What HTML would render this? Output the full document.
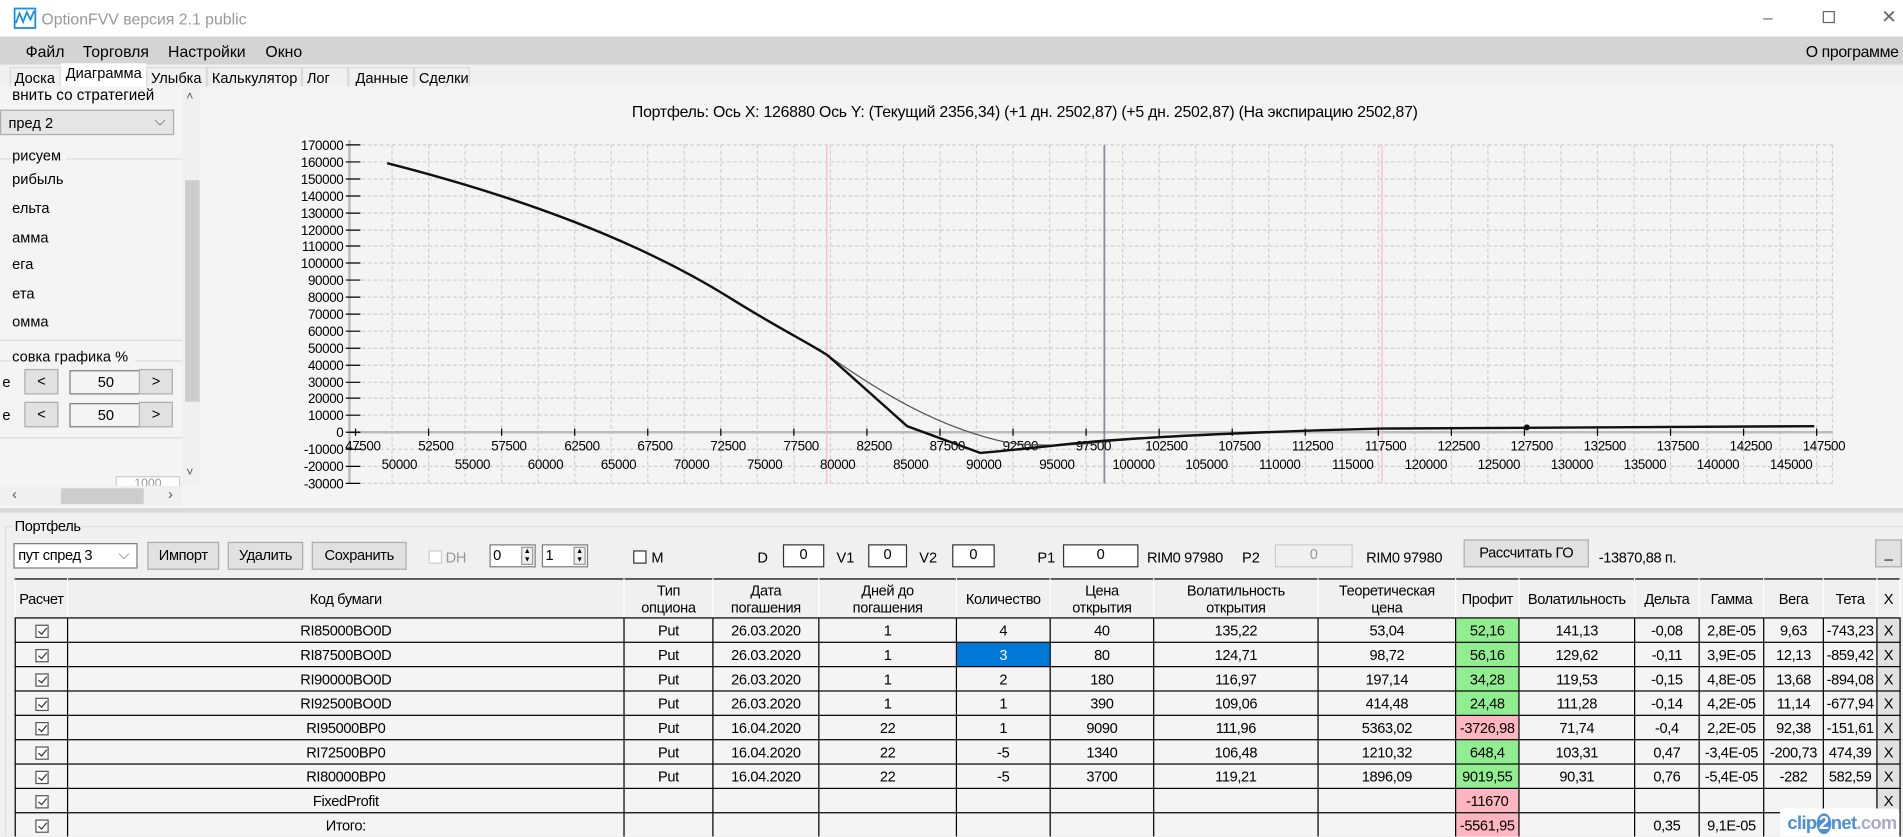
<!DOCTYPE html>
<html><head><meta charset="utf-8">
<style>
*{box-sizing:border-box;margin:0;padding:0}
body{width:1903px;height:836px;overflow:hidden;background:#f0f0f0;font-family:"Liberation Sans",sans-serif;font-size:12px;color:#000;position:relative}
#w{position:absolute;left:0;top:0;width:1563px;height:687px;transform:scale(1.2176);transform-origin:0 0;overflow:hidden}
.a{position:absolute;white-space:nowrap}
.btn{position:absolute;background:#e1e1e1;border:1px solid #adadad;text-align:center;font-size:12px;letter-spacing:-0.3px}
.inp{position:absolute;background:#fff;border:1px solid #7a7a7a;text-align:center;font-size:12px}
.cb{position:absolute;width:11px;height:11px;border:1px solid #333;background:#fff}
table{position:absolute;left:12px;top:475px;border-collapse:collapse;table-layout:fixed;font-size:12px;letter-spacing:-0.3px}
td{border:1px solid #000;height:20px;text-align:center;background:#f4f4f4;padding:0;overflow:hidden;white-space:nowrap}
tr.h td{height:32px;background:#f0f0f0;border-color:#000 #fff #000 #fff;line-height:14px}
td.g{background:#90ee90}td.p{background:#ffb6c1}td.x{background:#e1e1e1;border-color:#000 #000 #000 #adadad}
td.s{background:#0078d7;color:#fff}
.ck{display:inline-block;width:11px;height:11px;border:1px solid #555;background:#fff;position:relative;vertical-align:middle}
.ck:after{content:"";position:absolute;left:3px;top:0px;width:3px;height:6px;border:solid #333;border-width:0 1px 1px 0;transform:rotate(40deg)}
</style></head><body><div id="w">
<div class="a" style="left:0;top:0;width:1563px;height:30px;background:#fff"></div>
<svg class="a" style="left:11px;top:6px" width="19" height="18" viewBox="0 0 19 18"><rect x="1" y="1" width="17" height="16" fill="none" stroke="#1e90e0" stroke-width="1.5"/><path d="M2 13 L5 5 L8 12 L11 4 L14 10 L17 3" fill="none" stroke="#1e90e0" stroke-width="1.5"/></svg>
<div class="a" style="left:34px;top:8px;font-size:13px;color:#999">OptionFVV версия 2.1 public</div>
<div class="a" style="left:1448px;top:6px;font-size:14px;color:#666">–</div>
<div class="a" style="left:1497px;top:9px;width:10px;height:10px;border:1px solid #666"></div>
<div class="a" style="left:1545px;top:5px;font-size:15px;color:#666">✕</div>
<div class="a" style="left:0;top:30px;width:1563px;height:23px;background:#d4d4d4"></div>
<div class="a" style="left:21px;top:35px;font-size:13px">Файл</div>
<div class="a" style="left:68px;top:35px;font-size:13px">Торговля</div>
<div class="a" style="left:138px;top:35px;font-size:13px">Настройки</div>
<div class="a" style="left:218px;top:35px;font-size:13px">Окно</div>
<div class="a" style="left:1483px;top:35px;font-size:13px;letter-spacing:-0.3px">О программе</div>
<div class="a" style="left:8px;top:55px;width:42px;height:17px;border:1px solid #d9d9d9;background:#f0f0f0;padding:1px 3px">Доска</div>
<div class="a" style="left:50px;top:52px;width:70px;height:20px;background:#fff;padding:1px 4px">Диаграмма</div>
<div class="a" style="left:120px;top:55px;width:50px;height:17px;border:1px solid #d9d9d9;padding:1px 3px">Улыбка</div>
<div class="a" style="left:170px;top:55px;width:78px;height:17px;border:1px solid #d9d9d9;padding:1px 3px">Калькулятор</div>
<div class="a" style="left:248px;top:55px;width:38px;height:17px;border:1px solid #d9d9d9;padding:1px 3px">Лог</div>
<div class="a" style="left:286px;top:55px;width:54px;height:17px;border:1px solid #d9d9d9;padding:1px 5px">Данные</div>
<div class="a" style="left:340px;top:55px;width:46px;height:17px;border:1px solid #d9d9d9;padding:1px 3px">Сделки</div>
<div class="a" style="left:0;top:71px;width:165px;height:345px;background:#f4f4f4;overflow:hidden">
 <div class="a" style="left:10px;top:0px;font-size:12.5px">внить со стратегией</div>
 <div class="a" style="left:0;top:19px;width:143px;height:21px;background:#e5e5e5;border:1px solid #adadad;padding:3px 6px">пред 2<span style="position:absolute;right:6px;top:1px;color:#555">⌵</span></div>
 <div class="a" style="left:0;top:59px;width:150px;border-top:1px solid #ddd"></div>
 <div class="a" style="left:10px;top:50px;background:#f4f4f4;padding-right:4px">рисуем</div>
 <div class="a" style="left:10px;top:69px">рибыль</div>
 <div class="a" style="left:10px;top:93px">ельта</div>
 <div class="a" style="left:10px;top:117px">амма</div>
 <div class="a" style="left:10px;top:139px">ега</div>
 <div class="a" style="left:10px;top:163px">ета</div>
 <div class="a" style="left:10px;top:186px">омма</div>
 <div class="a" style="left:0;top:208px;width:150px;border-top:1px solid #ddd"></div>
 <div class="a" style="left:0;top:225px;width:150px;border-top:1px solid #ddd"></div>
 <div class="a" style="left:10px;top:215px;background:#f4f4f4;padding-right:6px">совка графика %</div>
 <div class="a" style="left:2px;top:236px">е</div>
 <div class="btn" style="left:20px;top:232px;width:28px;height:21px;line-height:19px">&lt;</div>
 <div class="inp" style="left:57px;top:233px;width:60px;height:20px;line-height:18px;background:#f4f4f4">50</div>
 <div class="btn" style="left:114px;top:232px;width:28px;height:21px;line-height:19px">&gt;</div>
 <div class="a" style="left:2px;top:263px">е</div>
 <div class="btn" style="left:20px;top:259px;width:28px;height:21px;line-height:19px">&lt;</div>
 <div class="inp" style="left:57px;top:260px;width:60px;height:20px;line-height:18px;background:#f4f4f4">50</div>
 <div class="btn" style="left:114px;top:259px;width:28px;height:21px;line-height:19px">&gt;</div>
 <div class="a" style="left:0;top:288px;width:150px;border-top:1px solid #ddd"></div>
 <div class="inp" style="left:95px;top:320px;width:53px;height:14px;font-size:10px;color:#999;border-color:#ccc">1000</div>
 <div class="a" style="left:150px;top:0;width:15px;height:328px;background:#f0f0f0"></div>
 <div class="a" style="left:152px;top:77px;width:12px;height:182px;background:#cdcdcd"></div>
 <div class="a" style="left:153px;top:3px;font-size:10px;color:#555">˄</div>
 <div class="a" style="left:153px;top:312px;font-size:10px;color:#555">˅</div>
 <div class="a" style="left:0;top:328px;width:150px;height:17px;background:#f0f0f0"></div>
 <div class="a" style="left:50px;top:330px;width:68px;height:13px;background:#cdcdcd"></div>
 <div class="a" style="left:10px;top:328px;color:#555">‹</div>
 <div class="a" style="left:138px;top:328px;color:#555">›</div>
</div>
<div class="a" style="left:165px;top:71px;width:1398px;height:345px;background:#f4f4f4"></div>
<div class="a" style="left:519px;top:84px;font-size:13px;letter-spacing:-0.2px">Портфель: Ось X: 126880 Ось Y:  (Текущий 2356,34)  (+1 дн. 2502,87)  (+5 дн. 2502,87)  (На экспирацию 2502,87)</div>
<svg class="a" style="left:0;top:0" width="1563" height="420" font-family="Liberation Sans, sans-serif" font-size="11">
<g stroke="#d0d0d0" stroke-dasharray="3,2" stroke-width="1">
<line x1="287" y1="119" x2="1505" y2="119"/><line x1="287" y1="133" x2="1505" y2="133"/><line x1="287" y1="147" x2="1505" y2="147"/><line x1="287" y1="161" x2="1505" y2="161"/><line x1="287" y1="175" x2="1505" y2="175"/><line x1="287" y1="189" x2="1505" y2="189"/><line x1="287" y1="202" x2="1505" y2="202"/><line x1="287" y1="216" x2="1505" y2="216"/><line x1="287" y1="230" x2="1505" y2="230"/><line x1="287" y1="244" x2="1505" y2="244"/><line x1="287" y1="258" x2="1505" y2="258"/><line x1="287" y1="272" x2="1505" y2="272"/><line x1="287" y1="286" x2="1505" y2="286"/><line x1="287" y1="300" x2="1505" y2="300"/><line x1="287" y1="314" x2="1505" y2="314"/><line x1="287" y1="327" x2="1505" y2="327"/><line x1="287" y1="341" x2="1505" y2="341"/><line x1="287" y1="369" x2="1505" y2="369"/><line x1="287" y1="383" x2="1505" y2="383"/><line x1="287" y1="397" x2="1505" y2="397"/>
<path d="M322 119V397M352 119V397M382 119V397M412 119V397M442 119V397M472 119V397M502 119V397M532 119V397M562 119V397M592 119V397M622 119V397M652 119V397M682 119V397M712 119V397M742 119V397M772 119V397M802 119V397M832 119V397M862 119V397M892 119V397M922 119V397M952 119V397M982 119V397M1012 119V397M1042 119V397M1072 119V397M1102 119V397M1132 119V397M1162 119V397M1192 119V397M1222 119V397M1252 119V397M1282 119V397M1312 119V397M1342 119V397M1372 119V397M1402 119V397M1432 119V397M1462 119V397M1492 119V397M1505 119V397"/>
</g>
<line x1="287" y1="355" x2="1505" y2="355" stroke="#bbb" stroke-width="2"/>
<line x1="287" y1="115" x2="287" y2="397" stroke="#bbb" stroke-width="2"/>
<line x1="679" y1="119" x2="679" y2="397" stroke="#ffb6c1"/>
<line x1="1135" y1="119" x2="1135" y2="397" stroke="#ffb6c1"/>
<line x1="907" y1="119" x2="907" y2="397" stroke="#8090a8" stroke-width="1.5"/>
<g stroke="#000"><path d="M284 119h12M284 133h12M284 147h12M284 161h12M284 175h12M284 189h12M284 202h12M284 216h12M284 230h12M284 244h12M284 258h12M284 272h12M284 286h12M284 300h12M284 314h12M284 327h12M284 341h12M284 355h12M284 369h12M284 383h12M284 397h12"/>
<path d="M292 352v6M352 352v6M412 352v6M472 352v6M532 352v6M592 352v6M652 352v6M712 352v6M772 352v6M832 352v6M892 352v6M952 352v6M1012 352v6M1072 352v6M1132 352v6M1192 352v6M1252 352v6M1312 352v6M1372 352v6M1432 352v6M1492 352v6"/></g>
<g text-anchor="end" letter-spacing="-0.3">
<text x="282" y="123">170000</text><text x="282" y="137">160000</text><text x="282" y="151">150000</text><text x="282" y="165">140000</text><text x="282" y="179">130000</text><text x="282" y="193">120000</text><text x="282" y="206">110000</text><text x="282" y="220">100000</text><text x="282" y="234">90000</text><text x="282" y="248">80000</text><text x="282" y="262">70000</text><text x="282" y="276">60000</text><text x="282" y="290">50000</text><text x="282" y="304">40000</text><text x="282" y="318">30000</text><text x="282" y="331">20000</text><text x="282" y="345">10000</text><text x="282" y="359">0</text><text x="282" y="373">-10000</text><text x="282" y="387">-20000</text><text x="282" y="401">-30000</text></g>
<g text-anchor="middle" letter-spacing="-0.3">
<text x="298" y="370">47500</text><text x="358" y="370">52500</text><text x="418" y="370">57500</text><text x="478" y="370">62500</text><text x="538" y="370">67500</text><text x="598" y="370">72500</text><text x="658" y="370">77500</text><text x="718" y="370">82500</text><text x="778" y="370">87500</text><text x="838" y="370">92500</text><text x="898" y="370">97500</text><text x="958" y="370">102500</text><text x="1018" y="370">107500</text><text x="1078" y="370">112500</text><text x="1138" y="370">117500</text><text x="1198" y="370">122500</text><text x="1258" y="370">127500</text><text x="1318" y="370">132500</text><text x="1378" y="370">137500</text><text x="1438" y="370">142500</text><text x="1498" y="370">147500</text>
<text x="328" y="385">50000</text><text x="388" y="385">55000</text><text x="448" y="385">60000</text><text x="508" y="385">65000</text><text x="568" y="385">70000</text><text x="628" y="385">75000</text><text x="688" y="385">80000</text><text x="748" y="385">85000</text><text x="808" y="385">90000</text><text x="868" y="385">95000</text><text x="931" y="385">100000</text><text x="991" y="385">105000</text><text x="1051" y="385">110000</text><text x="1111" y="385">115000</text><text x="1171" y="385">120000</text><text x="1231" y="385">125000</text><text x="1291" y="385">130000</text><text x="1351" y="385">135000</text><text x="1411" y="385">140000</text><text x="1471" y="385">145000</text></g>
<path d="M680 292 C720 320 770 352 830 364 C870 368 900 364 930 360" fill="none" stroke="#555" stroke-width="1"/>
<path d="M318 134 C420 160 520 195 600 245 C640 270 665 282 680 292 L745 350 L805 372 C850 368 880 364 907 362 C960 358 1050 354 1135 352 C1200 351 1300 351 1490 350" fill="none" stroke="#111" stroke-width="2"/>
<circle cx="1254" cy="351" r="2.5" fill="#111"/>
</svg>
<div class="a" style="left:0;top:416px;width:1563px;height:5px;background:#d9d9d9;border-top:1px solid #fff"></div>
<div class="a" style="left:4px;top:432px;width:1559px;border-top:1px solid #ddd"></div>
<div class="a" style="left:4px;top:432px;width:1px;height:260px;background:#ddd"></div>
<div class="a" style="left:10px;top:425px;background:#f0f0f0;padding:0 2px;letter-spacing:-0.3px">Портфель</div>
<div class="a" style="left:11px;top:446px;width:102px;height:21px;background:#fff;border:1px solid #7a7a7a;padding:2px 3px;letter-spacing:-0.3px">пут спред 3<span style="position:absolute;right:6px;top:1px;color:#777">⌵</span></div>
<div class="btn" style="left:121px;top:445px;width:59px;height:23px;line-height:21px">Импорт</div>
<div class="btn" style="left:187px;top:445px;width:62px;height:23px;line-height:21px">Удалить</div>
<div class="btn" style="left:256px;top:445px;width:78px;height:23px;line-height:21px">Сохранить</div>
<div class="cb" style="left:352px;top:452px;border-color:#ccc"></div>
<div class="a" style="left:366px;top:451px;color:#999;letter-spacing:-0.3px">DH</div>
<div class="inp" style="left:402px;top:447px;width:38px;height:19px;text-align:left;padding-left:2px;line-height:16px">0<span style="position:absolute;right:1px;top:1px;width:10px;height:15px;border:1px solid #999;background:#eee;font-size:6px;line-height:7px;text-align:center">▲<br>▼</span></div>
<div class="inp" style="left:445px;top:447px;width:38px;height:19px;text-align:left;padding-left:2px;line-height:16px">1<span style="position:absolute;right:1px;top:1px;width:10px;height:15px;border:1px solid #999;background:#eee;font-size:6px;line-height:7px;text-align:center">▲<br>▼</span></div>
<div class="cb" style="left:520px;top:452px"></div>
<div class="a" style="left:535px;top:451px">M</div>
<div class="a" style="left:622px;top:451px">D</div>
<div class="inp" style="left:643px;top:447px;width:34px;height:19px;border-color:#333">0</div>
<div class="a" style="left:687px;top:451px">V1</div>
<div class="inp" style="left:713px;top:447px;width:32px;height:19px;border-color:#333">0</div>
<div class="a" style="left:755px;top:451px">V2</div>
<div class="inp" style="left:782px;top:447px;width:35px;height:19px;border-color:#333">0</div>
<div class="a" style="left:852px;top:451px">P1</div>
<div class="inp" style="left:873px;top:447px;width:62px;height:19px;border-color:#333">0</div>
<div class="a" style="left:942px;top:451px;letter-spacing:-0.3px">RIM0 97980</div>
<div class="a" style="left:1020px;top:451px">P2</div>
<div class="inp" style="left:1047px;top:447px;width:64px;height:19px;border-color:#ccc;color:#999;background:#f0f0f0">0</div>
<div class="a" style="left:1122px;top:451px;letter-spacing:-0.3px">RIM0 97980</div>
<div class="btn" style="left:1202px;top:443px;width:103px;height:23px;line-height:21px">Рассчитать ГО</div>
<div class="a" style="left:1313px;top:451px;letter-spacing:-0.3px">-13870,88 п.</div>
<div class="btn" style="left:1540px;top:443px;width:22px;height:23px;line-height:21px">_</div>
<table>
<colgroup><col style="width:43px"><col style="width:457px"><col style="width:73px"><col style="width:87px"><col style="width:113px"><col style="width:77px"><col style="width:85px"><col style="width:135px"><col style="width:113px"><col style="width:52px"><col style="width:95px"><col style="width:53px"><col style="width:53px"><col style="width:49px"><col style="width:44px"><col style="width:19px"></colgroup>
<tr class="h"><td>Расчет</td><td>Код бумаги</td><td>Тип<br>опциона</td><td>Дата<br>погашения</td><td>Дней до<br>погашения</td><td>Количество</td><td>Цена<br>открытия</td><td>Волатильность<br>открытия</td><td>Теоретическая<br>цена</td><td>Профит</td><td>Волатильность</td><td>Дельта</td><td>Гамма</td><td>Вега</td><td>Тета</td><td>X</td></tr>
<tr><td><span class="ck"></span></td><td>RI85000BO0D</td><td>Put</td><td>26.03.2020</td><td>1</td><td>4</td><td>40</td><td>135,22</td><td>53,04</td><td class="g">52,16</td><td>141,13</td><td>-0,08</td><td>2,8E-05</td><td>9,63</td><td>-743,23</td><td class="x">X</td></tr>
<tr><td><span class="ck"></span></td><td>RI87500BO0D</td><td>Put</td><td>26.03.2020</td><td>1</td><td class="s">3</td><td>80</td><td>124,71</td><td>98,72</td><td class="g">56,16</td><td>129,62</td><td>-0,11</td><td>3,9E-05</td><td>12,13</td><td>-859,42</td><td class="x">X</td></tr>
<tr><td><span class="ck"></span></td><td>RI90000BO0D</td><td>Put</td><td>26.03.2020</td><td>1</td><td>2</td><td>180</td><td>116,97</td><td>197,14</td><td class="g">34,28</td><td>119,53</td><td>-0,15</td><td>4,8E-05</td><td>13,68</td><td>-894,08</td><td class="x">X</td></tr>
<tr><td><span class="ck"></span></td><td>RI92500BO0D</td><td>Put</td><td>26.03.2020</td><td>1</td><td>1</td><td>390</td><td>109,06</td><td>414,48</td><td class="g">24,48</td><td>111,28</td><td>-0,14</td><td>4,2E-05</td><td>11,14</td><td>-677,94</td><td class="x">X</td></tr>
<tr><td><span class="ck"></span></td><td>RI95000BP0</td><td>Put</td><td>16.04.2020</td><td>22</td><td>1</td><td>9090</td><td>111,96</td><td>5363,02</td><td class="p">-3726,98</td><td>71,74</td><td>-0,4</td><td>2,2E-05</td><td>92,38</td><td>-151,61</td><td class="x">X</td></tr>
<tr><td><span class="ck"></span></td><td>RI72500BP0</td><td>Put</td><td>16.04.2020</td><td>22</td><td>-5</td><td>1340</td><td>106,48</td><td>1210,32</td><td class="g">648,4</td><td>103,31</td><td>0,47</td><td>-3,4E-05</td><td>-200,73</td><td>474,39</td><td class="x">X</td></tr>
<tr><td><span class="ck"></span></td><td>RI80000BP0</td><td>Put</td><td>16.04.2020</td><td>22</td><td>-5</td><td>3700</td><td>119,21</td><td>1896,09</td><td class="g">9019,55</td><td>90,31</td><td>0,76</td><td>-5,4E-05</td><td>-282</td><td>582,59</td><td class="x">X</td></tr>
<tr><td><span class="ck"></span></td><td>FixedProfit</td><td></td><td></td><td></td><td></td><td></td><td></td><td></td><td class="p">-11670</td><td></td><td></td><td></td><td></td><td></td><td class="x">X</td></tr>
<tr><td><span class="ck"></span></td><td>Итого:</td><td></td><td></td><td></td><td></td><td></td><td></td><td></td><td class="p">-5561,95</td><td></td><td>0,35</td><td>9,1E-05</td><td>-34</td><td></td><td class="x"></td></tr>
</table>
<div class="a" style="left:1462px;top:664px;width:98px;height:26px;background:#fff;border-radius:3px;padding:4px 6px;font-size:15px;color:#4a90d9;font-weight:bold;letter-spacing:-0.5px">clip<span style="color:#fff;background:#4a90d9;border-radius:50%;padding:0 2px">2</span>net<span style="color:#aac">.com</span></div>
</div></body></html>
